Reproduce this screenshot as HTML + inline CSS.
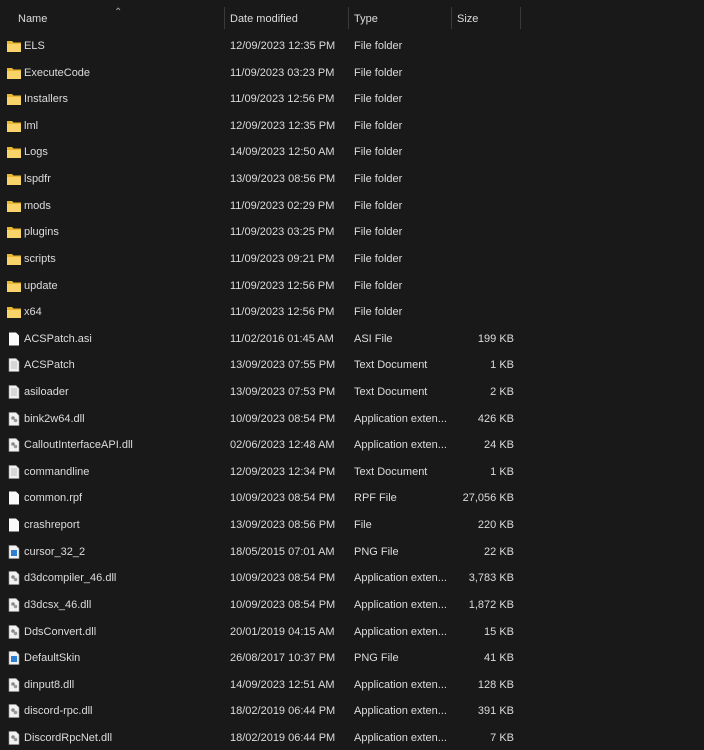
<!DOCTYPE html>
<html><head><meta charset="utf-8"><style>
html,body{margin:0;padding:0;background:#191919;width:704px;height:750px;overflow:hidden;font-family:"Liberation Sans",sans-serif;font-size:11px;color:#dcdcdc}
.h{position:absolute;top:13px;font-size:11px;color:#dcdcdc}
.sep{position:absolute;top:7px;width:1px;height:22px;background:#3a3a3a}
.r{position:absolute;left:0;width:704px;height:26px}
.r span{position:absolute;top:8px;white-space:nowrap}
.n{left:24px}.d{left:230px}.t{left:354px}.s{right:190px;text-align:right}
.r svg{position:absolute;left:6px;top:6px}
</style></head><body>
<div class="h" style="left:18px">Name</div>
<div class="h" style="left:114px;top:7px;font-size:10px;color:#aaa">&#8963;</div>
<div class="sep" style="left:224px"></div>
<div class="h" style="left:230px">Date modified</div>
<div class="sep" style="left:348px"></div>
<div class="h" style="left:354px">Type</div>
<div class="sep" style="left:451px"></div>
<div class="h" style="left:457px">Size</div>
<div class="sep" style="left:520px"></div>
<div id="rows"></div>
<script>
var F='<svg width="16" height="16"><path d="M1 3h5l1.5 1.5H15V14H1z" fill="#e9b730"/><path d="M1 6h14v8H1z" fill="#f8d36a"/></svg>';
var B='<svg width="16" height="16"><path d="M3 1.5h7l3 3V14.5H3z" fill="#fafafa"/></svg>';
var T='<svg width="16" height="16"><path d="M3 1.5h7l3 3V14.5H3z" fill="#f2f2f2" stroke="#999" stroke-width=".6"/><path d="M5 5h6M5 7h6M5 9h6M5 11h6" stroke="#aaa" stroke-width=".8"/></svg>';
var D='<svg width="16" height="16"><path d="M3 1.5h7l3 3V14.5H3z" fill="#f2f2f2" stroke="#999" stroke-width=".6"/><circle cx="7" cy="7" r="1.8" fill="#8a8a8a"/><circle cx="9.5" cy="9.5" r="1.8" fill="#9a9a9a"/></svg>';
var P='<svg width="16" height="16"><path d="M3 1.5h7l3 3V14.5H3z" fill="#f2f2f2" stroke="#999" stroke-width=".6"/><rect x="5" y="6" width="6" height="6" fill="#2d7fd4"/></svg>';
var rows=[
[F,"ELS","12/09/2023 12:35 PM","File folder",""],
[F,"ExecuteCode","11/09/2023 03:23 PM","File folder",""],
[F,"Installers","11/09/2023 12:56 PM","File folder",""],
[F,"lml","12/09/2023 12:35 PM","File folder",""],
[F,"Logs","14/09/2023 12:50 AM","File folder",""],
[F,"lspdfr","13/09/2023 08:56 PM","File folder",""],
[F,"mods","11/09/2023 02:29 PM","File folder",""],
[F,"plugins","11/09/2023 03:25 PM","File folder",""],
[F,"scripts","11/09/2023 09:21 PM","File folder",""],
[F,"update","11/09/2023 12:56 PM","File folder",""],
[F,"x64","11/09/2023 12:56 PM","File folder",""],
[B,"ACSPatch.asi","11/02/2016 01:45 AM","ASI File","199 KB"],
[T,"ACSPatch","13/09/2023 07:55 PM","Text Document","1 KB"],
[T,"asiloader","13/09/2023 07:53 PM","Text Document","2 KB"],
[D,"bink2w64.dll","10/09/2023 08:54 PM","Application exten...","426 KB"],
[D,"CalloutInterfaceAPI.dll","02/06/2023 12:48 AM","Application exten...","24 KB"],
[T,"commandline","12/09/2023 12:34 PM","Text Document","1 KB"],
[B,"common.rpf","10/09/2023 08:54 PM","RPF File","27,056 KB"],
[B,"crashreport","13/09/2023 08:56 PM","File","220 KB"],
[P,"cursor_32_2","18/05/2015 07:01 AM","PNG File","22 KB"],
[D,"d3dcompiler_46.dll","10/09/2023 08:54 PM","Application exten...","3,783 KB"],
[D,"d3dcsx_46.dll","10/09/2023 08:54 PM","Application exten...","1,872 KB"],
[D,"DdsConvert.dll","20/01/2019 04:15 AM","Application exten...","15 KB"],
[P,"DefaultSkin","26/08/2017 10:37 PM","PNG File","41 KB"],
[D,"dinput8.dll","14/09/2023 12:51 AM","Application exten...","128 KB"],
[D,"discord-rpc.dll","18/02/2019 06:44 PM","Application exten...","391 KB"],
[D,"DiscordRpcNet.dll","18/02/2019 06:44 PM","Application exten...","7 KB"]];
var h='';
rows.forEach(function(r,i){var top=Math.round(45+i*26.615-13);
h+='<div class="r" style="top:'+top+'px">'+r[0]+'<span class="n">'+r[1]+'</span><span class="d">'+r[2]+'</span><span class="t">'+r[3]+'</span><span class="s">'+r[4]+'</span></div>';});
document.getElementById('rows').innerHTML=h;
</script>
</body></html>
